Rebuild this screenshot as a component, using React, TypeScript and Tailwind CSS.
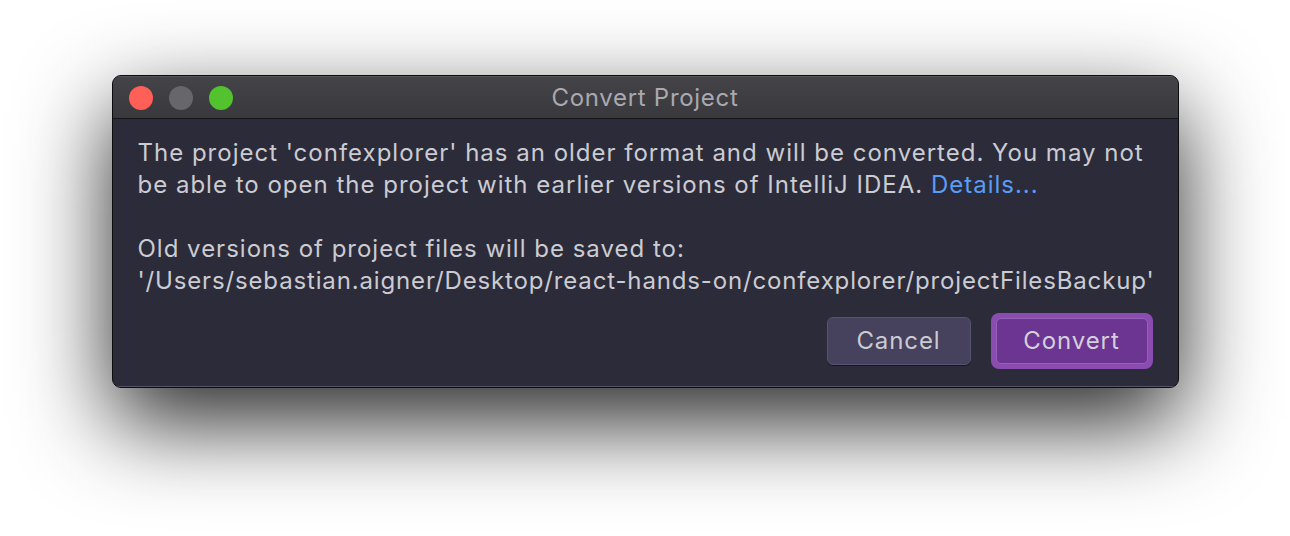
import React from 'react';

const App: React.FC = () => {
  return (
    <div
      className="min-h-[536px] w-full bg-white flex justify-center pt-[75px]"
      style={{ fontFamily: 'Inter, "Liberation Sans", Arial, sans-serif' }}
    >
      {/* Dialog window */}
      <div className="w-[1067px] h-[313px] rounded-[9px] border border-[#0c0c0e] bg-[#2c2b3a] shadow-[0_34px_90px_rgba(0,0,0,0.85)] overflow-hidden flex flex-col">
        {/* Title bar */}
        <div className="relative h-[43px] shrink-0 bg-gradient-to-b from-[#434348] to-[#38383d] border-t border-[#55555a] border-b border-b-[#141416] flex items-center">
          <div className="flex items-center gap-[16px] pl-[16px]">
            <span className="w-[24px] h-[24px] rounded-full bg-[#fe5f57]" />
            <span className="w-[24px] h-[24px] rounded-full bg-[#66666b]" />
            <span className="w-[24px] h-[24px] rounded-full bg-[#52c22f]" />
          </div>
          <div className="absolute inset-0 flex items-center justify-center text-[24px] tracking-[0.7px] text-[#a9a9af] pointer-events-none">
            Convert Project
          </div>
        </div>

        {/* Body */}
        <div className="flex-1 flex flex-col px-[25px] pt-[18px] text-[24px] leading-[32px] text-[#cbcbd2] border-b border-[#55556a] whitespace-nowrap">
          <p className="tracking-[1px]">
            The project 'confexplorer' has an older format and will be converted. You may not
            <br />
            be able to open the project with earlier versions of IntelliJ IDEA.{' '}
            <span className="text-[#589df6]">Details...</span>
          </p>
          <p className="mt-[32px] tracking-[0.85px]">
            <span className="tracking-[1px]">Old versions of project files will be saved to:</span>
            <br />
            '/Users/sebastian.aigner/Desktop/react-hands-on/confexplorer/projectFilesBackup'
          </p>

          {/* Buttons */}
          <div className="flex justify-end items-center gap-[20px] mt-[16px]">
            <button className="w-[144px] h-[48px] rounded-[6px] bg-[#46415d] border border-[#575370] shadow-[0_1px_0_rgba(0,0,0,0.5)] text-[24px] tracking-[0.9px] text-[#cbcbd2]">
              Cancel
            </button>
            <div className="rounded-[8px] bg-[#8a4cb0] p-[5px]">
              <button className="w-[152px] h-[46px] rounded-[5px] bg-[#6b3591] border border-[#9461b8] text-[24px] tracking-[0.9px] text-[#d4d0da]">
                Convert
              </button>
            </div>
          </div>
        </div>
      </div>
    </div>
  );
};

export default App;
